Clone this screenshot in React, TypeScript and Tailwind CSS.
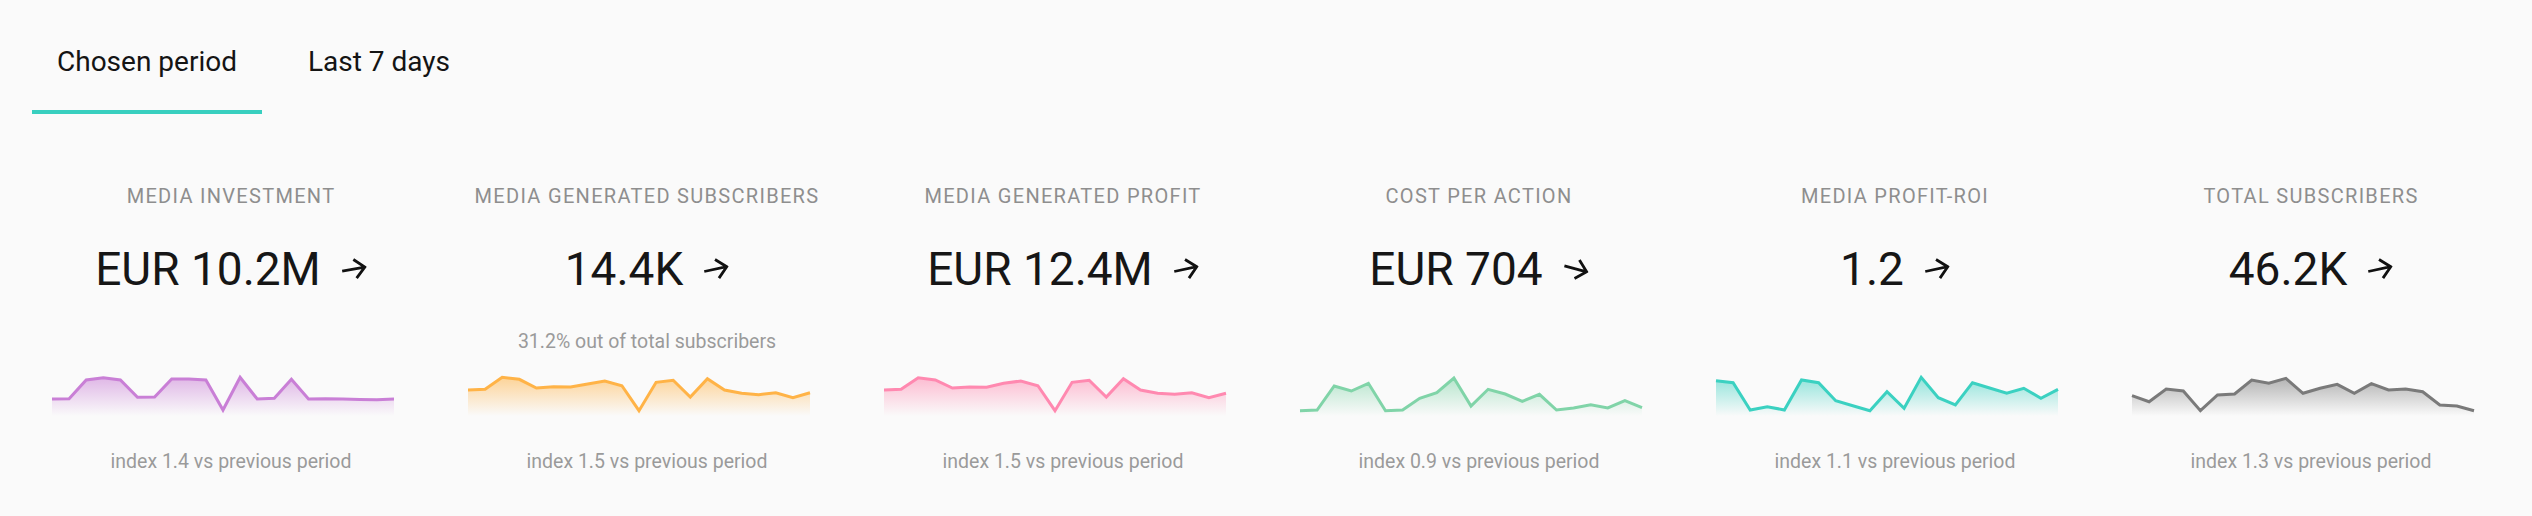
import React from "react";

type Metric = {
  title: string;
  value: string;
  sub?: string;
  index: string;
  rot: string;
  color: string;
  id: string;
  ys: number[];
};

const metrics: Metric[] = [
  {
    title: "MEDIA INVESTMENT",
    value: "EUR 10.2M",
    index: "index 1.4 vs previous period",
    rot: "-rotate-[10deg]",
    color: "#c97fd6",
    id: "g0",
    ys: [31, 30.7, 12, 9.7, 12, 29.3, 29, 11, 11, 12, 42, 9.3, 31, 30.3, 11.3, 31, 30.7, 31, 31.5, 31.7, 31],
  },
  {
    title: "MEDIA GENERATED SUBSCRIBERS",
    value: "14.4K",
    sub: "31.2% out of total subscribers",
    index: "index 1.5 vs previous period",
    rot: "-rotate-[12deg]",
    color: "#ffb347",
    id: "g1",
    ys: [22, 21.3, 9.3, 11.3, 20, 18.7, 19, 16, 13, 17.7, 42.7, 14.3, 12.3, 29, 10.7, 22, 25.3, 26.7, 24.7, 29.7, 24.7],
  },
  {
    title: "MEDIA GENERATED PROFIT",
    value: "EUR 12.4M",
    index: "index 1.5 vs previous period",
    rot: "-rotate-[12deg]",
    color: "#ff89b0",
    id: "g2",
    ys: [22, 21.3, 9.7, 12, 20, 19, 19.3, 15.3, 13, 17.7, 42.7, 14.3, 12.3, 29, 10.7, 22, 25.3, 26.3, 24.7, 29.7, 25.3],
  },
  {
    title: "COST PER ACTION",
    value: "EUR 704",
    index: "index 0.9 vs previous period",
    rot: "rotate-[15deg]",
    color: "#80d4a8",
    id: "g3",
    ys: [42.7, 42, 18, 23, 15.3, 42.7, 42, 30.3, 24.7, 10, 38, 21.3, 26, 33.3, 26.3, 42, 40, 36.7, 40, 32.7, 39.7],
  },
  {
    title: "MEDIA PROFIT-ROI",
    value: "1.2",
    index: "index 1.1 vs previous period",
    rot: "-rotate-[12deg]",
    color: "#3bd1c1",
    id: "g4",
    ys: [12.7, 14.7, 42, 38.7, 42, 12, 14.7, 32.7, 37.7, 42.7, 23.7, 40.3, 9.3, 29.7, 37, 14.7, 20, 25.3, 20.3, 30.3, 21.3],
  },
  {
    title: "TOTAL SUBSCRIBERS",
    value: "46.2K",
    index: "index 1.3 vs previous period",
    rot: "-rotate-[12deg]",
    color: "#7a7a7a",
    id: "g5",
    ys: [27.7, 33.7, 21, 23, 42.7, 27, 26, 12, 15.3, 10.3, 25.3, 20.3, 16.3, 25.3, 15.7, 22, 21, 23.7, 37, 38, 42.7],
  },
];

function Sparkline({ ys, color, id }: { ys: number[]; color: string; id: string }) {
  const W = 342;
  const H = 48;
  const step = W / (ys.length - 1);
  const pts = ys.map((y, i) => `${(i * step).toFixed(1)},${y}`);
  const line = "M" + pts.join(" L");
  const area = `${line} L${W},${H} L0,${H} Z`;
  return (
    <svg width={W} height={H} viewBox={`0 0 ${W} ${H}`} className="mr-4 block overflow-visible">
      <defs>
        <linearGradient id={id} x1="0" y1="0" x2="0" y2="1">
          <stop offset="0%" stopColor={color} stopOpacity="0.55" />
          <stop offset="100%" stopColor={color} stopOpacity="0" />
        </linearGradient>
      </defs>
      <path d={area} fill={`url(#${id})`} />
      <path d={line} fill="none" stroke={color} strokeWidth="3" strokeLinejoin="miter" />
    </svg>
  );
}

function Arrow({ rot }: { rot: string }) {
  return (
    <svg width="26" height="22" viewBox="0 0 26 22" className={`ml-5 ${rot}`}>
      <path d="M1 11 H24 M14 1.5 L24 11 L14 20.5" fill="none" stroke="#111" strokeWidth="2.8" />
    </svg>
  );
}

export default function App() {
  return (
    <div className="w-[2532px] h-[516px] bg-[#fafafa] font-['Roboto',sans-serif] text-[#141414]">
      <div className="flex gap-[21px] pl-[32px]">
        <div className="px-[25px] pt-[46px] pb-[32px] border-b-4 border-[#38cfbf] text-[28px] leading-[32px]">
          Chosen period
        </div>
        <div className="px-[25px] pt-[46px] pb-[32px] border-b-4 border-transparent text-[28px] leading-[32px]">
          Last 7 days
        </div>
      </div>
      <div className="grid grid-cols-6 pl-[23px] pr-[13px] pt-[70px]">
        {metrics.map((m) => (
          <div key={m.title} className="flex flex-col items-center">
            <div className="h-[24px] text-[20px] leading-[24px] tracking-[1.3px] text-[#8e8e8e]">{m.title}</div>
            <div className="mt-[33px] flex h-[56px] items-center">
              <span className="text-[46px] leading-[56px] text-[#161616]">{m.value}</span>
              <Arrow rot={m.rot} />
            </div>
            <div className="mt-[33px] h-[24px] text-[19.5px] leading-[24px] text-[#9a9a9a]">{m.sub ?? ""}</div>
            <div className="mt-[14px] flex w-full justify-center">
              <Sparkline ys={m.ys} color={m.color} id={m.id} />
            </div>
            <div className="mt-[34px] h-[24px] text-[19.5px] leading-[24px] text-[#9a9a9a]">{m.index}</div>
          </div>
        ))}
      </div>
    </div>
  );
}
